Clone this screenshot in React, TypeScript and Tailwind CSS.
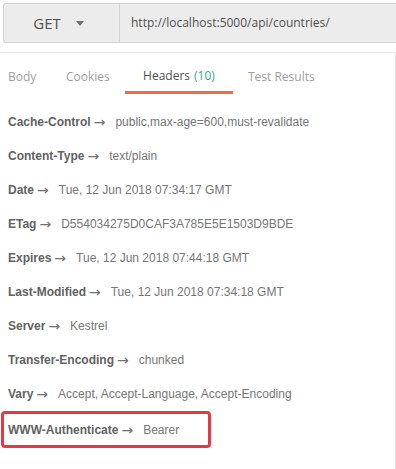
import React from 'react';

const rows: [string, string][] = [
    ['Cache-Control', 'public,max-age=600,must-revalidate'],
    ['Content-Type', 'text/plain'],
    ['Date', 'Tue, 12 Jun 2018 07:34:17 GMT'],
    ['ETag', 'D554034275D0CAF3A785E5E1503D9BDE'],
    ['Expires', 'Tue, 12 Jun 2018 07:44:18 GMT'],
    ['Last-Modified', 'Tue, 12 Jun 2018 07:34:18 GMT'],
    ['Server', 'Kestrel'],
    ['Transfer-Encoding', 'chunked'],
    ['Vary', 'Accept, Accept-Language, Accept-Encoding'],
];

const Arrow = () => (
    <span className="ml-[3px] text-[14px] leading-none text-[#707070]" style={{ fontFamily: '"DejaVu Sans", sans-serif' }}>→</span>
);

const Row = ( { name, value }: { name: string; value: string } ) => (
    <div className="h-[34px] flex items-center text-[12px]">
        <span className="font-bold text-[#626262]">{name}</span>
        <Arrow />
        <span className="ml-[10px] text-[#767676]">{value}</span>
    </div>
);

const App: React.FC = () => {
    return (
        <div className="w-[396px] h-[469px] bg-white overflow-hidden" style={{ fontFamily: '"Liberation Sans", Arial, sans-serif' }}>
            {/* barra de la petición */}
            <div className="pt-[3px] pl-[3px]">
                <div className="h-[40px] flex bg-[#ececec] border border-r-0 border-[#d4d4d4] rounded-l-[3px]">
                    <div className="w-[116px] flex items-center justify-center gap-[15px] border-r border-[#d4d4d4] pr-[6px]" style={{ fontFamily: '"Open Sans", sans-serif' }}>
                        <span className="text-[15px] text-[#505050]">GET</span>
                        <svg width="8" height="5" viewBox="0 0 8 5"><path d="M0 0h8L4 5z" fill="#707070" /></svg>
                    </div>
                    <div className="flex items-center pl-[11px] text-[12px] text-[#505050]" style={{ fontFamily: '"Open Sans", sans-serif' }}>
                        http://localhost:5000/api/countries/
                    </div>
                </div>
            </div>

            <div className="mt-[9px] border-t border-r border-[#e6e6e6] h-[500px]">
                {/* pestañas */}
                <div className="h-[41px] flex items-end text-[12px] text-[#a0a0a0]" style={{ fontFamily: '"Open Sans", sans-serif' }}>
                    <div className="pl-[8px] w-[66px] pb-[8px]">Body</div>
                    <div className="w-[59px] pb-[8px]">Cookies</div>
                    <div className="w-[108px] flex justify-center pb-[6px] border-b-[3px] border-[#ef6a45] text-[#505050]">
                        Headers <span className="ml-[4px] text-[#3aa58f]">(10)</span>
                    </div>
                    <div className="ml-[15px] pb-[8px]">Test Results</div>
                </div>

                <div className="mt-[11px] pl-[8px]">
                    {rows.map( ( [name, value] ) => (
                        <Row key={name} name={name} value={value} />
                    ) )}
                    <div className="-ml-[7px] w-[210px] h-[37px] flex items-center pl-[4px] border-[3px] border-[#e3393f] rounded-[4px] text-[12px]">
                        <span className="font-bold text-[#626262]">WWW-Authenticate</span>
                        <Arrow />
                        <span className="ml-[10px] text-[#767676]">Bearer</span>
                    </div>
                </div>
            </div>
        </div>
    );
};

export default App;
